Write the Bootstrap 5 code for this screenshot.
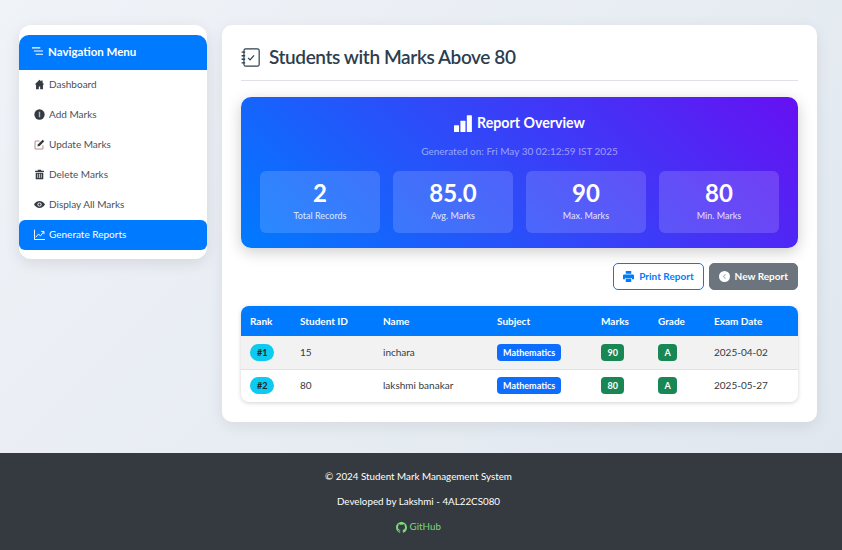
<!DOCTYPE html>
<html lang="en">
<head>
<meta charset="UTF-8">
<title>Students with Marks Above 80</title>
<link href="https://cdn.jsdelivr.net/npm/bootstrap@5.3.0/dist/css/bootstrap.min.css" rel="stylesheet">
<style>
  body {
    font-family: "Lato", "Liberation Sans", sans-serif;
    background: linear-gradient(135deg, #f0f3f8 0%, #dfe6ee 100%);
    min-height: 550px;
    color: #2c3e50;
    font-size: 10px;
  }
  .page-grid {
    display: grid;
    grid-template-columns: 188px 595px;
    gap: 15px;
    padding: 25px 25px 31px 19px;
    align-items: start;
  }
  .side-panel {
    background: #fff;
    border-radius: 12px;
    padding: 10px 0 9px;
    box-shadow: 0 4px 15px rgba(0, 0, 0, .1);
  }
  .side-head {
    background: #007bff;
    color: #fff;
    height: 35px;
    border-radius: 10px 10px 0 0;
    font-weight: 700;
    font-size: 11.5px;
    padding-left: 13px;
    padding-bottom: 2px;
    gap: 5px;
  }
  .side-link {
    height: 30px;
    padding-left: 15px;
    padding-bottom: 1px;
    gap: 4px;
    color: #495057;
    text-decoration: none;
    font-size: 10px;
  }
  .side-link.active {
    background: #007bff;
    color: #fff;
    border-radius: 6px;
  }
  .side-link svg { width: 11px; height: 11px; }
  .main-panel {
    background: #fff;
    border-radius: 10px;
    padding: 20px 19px;
    box-shadow: 0 4px 15px rgba(0, 0, 0, .08);
  }
  .page-title {
    height: 36px;
    border-bottom: 1px solid #dee2e6;
    padding-bottom: 11px;
    margin-bottom: 16px;
    gap: 9px;
    font-size: 19px;
    font-weight: 600;
    letter-spacing: -.4px;
    color: #2c3e50;
  }
  .report-box {
    background: linear-gradient(45deg, #007bff 0%, #6610f2 100%);
    border-radius: 10px;
    padding: 16px 19px 15px;
    color: #fff;
    height: 151px;
    box-shadow: 0 4px 15px rgba(0, 0, 0, .2);
  }
  .report-title { font-size: 14.2px; font-weight: 700; gap: 5px; height: 20px; }
  .report-date { font-size: 10px; color: rgba(255, 255, 255, .5); margin: 12px 0 13px; height: 13px; line-height: 13px; }
  .stat-row { display: grid; grid-template-columns: repeat(4, 120px); gap: 13px; }
  .stat-box {
    background: rgba(255, 255, 255, .15);
    border-radius: 6px;
    height: 62px;
    padding-top: 7px;
  }
  .stat-num { font-size: 24px; font-weight: 700; line-height: 29px; }
  .stat-lbl { font-size: 9px; font-weight: 500; color: rgba(255, 255, 255, .8); line-height: 14px; margin-top: 2px; }
  .action-row { margin: 15px 0 16px; gap: 5px; }
  .action-btn {
    height: 27px;
    font-size: 10px;
    font-weight: 700;
    padding: 0 9px;
    gap: 5px;
    border-radius: 5px;
    display: inline-flex;
    align-items: center;
  }
  .btn-outline-primary.action-btn { border-color: #007bff; color: #007bff; }
  .table-wrap {
    border-radius: 8px;
    overflow: hidden;
    box-shadow: 0 1px 4px rgba(0, 0, 0, .18);
  }
  .marks-table { margin: 0; font-size: 10px; width: 100%; table-layout: fixed; }
  .marks-table th {
    background: #007bff;
    color: #fff;
    border: 0;
    height: 30px;
    padding: 1px 9px 0;
    font-weight: 700;
    vertical-align: middle;
  }
  .marks-table td { height: 33px; padding: 1px 9px 0; vertical-align: middle; color: #343a40; border-color: #dee2e6; }
  .marks-table tr:last-child td { border-bottom: 0; height: 33px; padding-top: 0; }
  .row-shade td { background: #f2f2f2; }
  .pill-tag, .sq-tag {
    display: inline-block;
    font-size: 9px;
    font-weight: 700;
    line-height: 17px;
    color: #fff;
    border-radius: 4px;
  }
  .pill-tag { background: #0dcaf0; color: #212529; border-radius: 9px; padding: 0 7px; }
  .sq-tag { padding: 0 6.500px; }
  .tag-blue { background: #0d6efd; padding: 0 6px; }
  .tag-green { background: #198754; }
  .site-foot {
    background: #343a40;
    color: #fff;
    height: 97px;
    padding: 17px 5px 0 0;
    font-size: 9.800px;
    line-height: 13px;
  }
  .site-foot p { margin: 0 0 12px; }
  .site-foot a { color: #7ad97a; text-decoration: none; }
</style>
</head>
<body>
<div class="page-grid">
  <aside class="side-panel">
    <div class="side-head d-flex align-items-center">
      <svg width="11" height="11" viewBox="0 0 12 12" fill="none" stroke="#fff" stroke-width="1.200"><path d="M0 2h9M2 5.500h10M4 9h8"/></svg>
      Navigation Menu
    </div>
    <nav class="d-flex flex-column">
      <a class="side-link d-flex align-items-center" href="#">
        <svg viewBox="0 0 16 16" fill="#343a40"><path d="M8 1 1 8h2v7h4v-4h2v4h4V8h2l-2.500-2.500V2h-2v1.500z"/></svg>
        Dashboard</a>
      <a class="side-link d-flex align-items-center" href="#">
        <svg viewBox="0 0 16 16"><circle cx="8" cy="8" r="7.500" fill="#343a40"/><rect x="7" y="4" width="2" height="8" fill="#adb5bd"/></svg>
        Add Marks</a>
      <a class="side-link d-flex align-items-center" href="#">
        <svg viewBox="0 0 16 16" fill="none"><path d="M13 9v4.500a1 1 0 0 1-1 1H2.500a1 1 0 0 1-1-1V4a1 1 0 0 1 1-1H8" stroke="#b58f86" stroke-width="1.500"/><path d="M5 11l.8-3.200 6.800-6.800 2.400 2.400-6.800 6.800z" fill="#343a40"/></svg>
        Update Marks</a>
      <a class="side-link d-flex align-items-center" href="#">
        <svg viewBox="0 0 16 16" fill="#343a40"><path d="M1.500 2.500H5.500V1h5v1.500h4V4.500h-13zM2.500 5.500h11V15h-11zM5 7v6h1V7zM7.500 7v6h1V7zM10 7v6h1V7z" fill-rule="evenodd"/></svg>
        Delete Marks</a>
      <a class="side-link d-flex align-items-center" href="#">
        <svg viewBox="0 0 16 16"><path d="M0 8s3-5 8-5 8 5 8 5-3 5-8 5-8-5-8-5" fill="#343a40"/><circle cx="8" cy="8" r="3" fill="#fff"/><circle cx="8" cy="8" r="1.700" fill="#343a40"/></svg>
        Display All Marks</a>
      <a class="side-link active d-flex align-items-center" href="#">
        <svg viewBox="0 0 16 16" fill="none" stroke="#fff" stroke-width="1.400"><path d="M.7 1v14.300H16M2.500 12l4-4.500 3 2.500L14 4M10.500 3.500h4v4"/></svg>
        Generate Reports</a>
    </nav>
  </aside>

  <main class="main-panel">
    <div class="page-title d-flex align-items-center">
      <svg width="19" height="19" viewBox="0 0 16 16" fill="none" stroke="#2c3e50"><rect x="2.500" y=".7" width="12.800" height="14.600" rx="1.500" stroke-width="1"/><path d="M6 8.300 7.600 10 11 6.200" stroke-width="1"/><path d="M.5 3.500h3M.5 6.500h3M.5 9.500h3M.5 12.500h3" stroke-width="1.200"/></svg>
      Students with Marks Above 80
    </div>

    <section class="report-box text-center">
      <div class="report-title d-flex align-items-center justify-content-center">
        <svg width="18" height="18" viewBox="0 0 16 16" fill="#fff"><rect x="0" y="10" width="4.500" height="6" rx=".5"/><rect x="5.700" y="6" width="4.500" height="10" rx=".5"/><rect x="11.400" y="1" width="4.500" height="15" rx=".5"/></svg>
        Report Overview
      </div>
      <div class="report-date">Generated on: Fri May 30 02:12:59 IST 2025</div>
      <div class="stat-row">
        <div class="stat-box"><div class="stat-num">2</div><div class="stat-lbl">Total Records</div></div>
        <div class="stat-box"><div class="stat-num">85.0</div><div class="stat-lbl">Avg. Marks</div></div>
        <div class="stat-box"><div class="stat-num">90</div><div class="stat-lbl">Max. Marks</div></div>
        <div class="stat-box"><div class="stat-num">80</div><div class="stat-lbl">Min. Marks</div></div>
      </div>
    </section>

    <div class="action-row d-flex justify-content-end">
      <button type="button" class="btn btn-outline-primary action-btn">
        <svg width="11" height="11" viewBox="0 0 16 16" fill="#007bff"><path d="M4 0h8v4H4zM1.500 5h13A1.500 1.500 0 0 1 16 6.500V12h-3v-2H3v2H0V6.500A1.500 1.500 0 0 1 1.500 5M4 11h8v5H4z"/></svg>
        Print Report</button>
      <button type="button" class="btn btn-secondary action-btn">
        <svg width="11" height="11" viewBox="0 0 16 16"><circle cx="8" cy="8" r="8" fill="#fff"/><path d="M9.500 5 6.500 8l3 3" fill="none" stroke="#adb5bd" stroke-width="1.500"/></svg>
        New Report</button>
    </div>

    <div class="table-wrap">
      <table class="table marks-table">
        <colgroup><col style="width:50px"><col style="width:83px"><col style="width:114px"><col style="width:104px"><col style="width:57px"><col style="width:56px"><col></colgroup>
        <thead>
          <tr><th>Rank</th><th>Student ID</th><th>Name</th><th>Subject</th><th>Marks</th><th>Grade</th><th>Exam Date</th></tr>
        </thead>
        <tbody>
          <tr class="row-shade">
            <td><span class="pill-tag">#1</span></td><td>15</td><td>inchara</td>
            <td><span class="sq-tag tag-blue">Mathematics</span></td>
            <td><span class="sq-tag tag-green">90</span></td>
            <td><span class="sq-tag tag-green">A</span></td>
            <td>2025-04-02</td>
          </tr>
          <tr>
            <td><span class="pill-tag">#2</span></td><td>80</td><td>lakshmi banakar</td>
            <td><span class="sq-tag tag-blue">Mathematics</span></td>
            <td><span class="sq-tag tag-green">80</span></td>
            <td><span class="sq-tag tag-green">A</span></td>
            <td>2025-05-27</td>
          </tr>
        </tbody>
      </table>
    </div>
  </main>
</div>

<footer class="site-foot text-center">
  <p>© 2024 Student Mark Management System</p>
  <p>Developed by Lakshmi - 4AL22CS080</p>
  <a href="#"><svg width="11" height="11" viewBox="0 0 16 16" fill="#7ad97a"><path d="M8 0C3.580 0 0 3.580 0 8c0 3.540 2.290 6.530 5.470 7.590.4.070.55-.17.55-.38 0-.19-.01-.82-.01-1.490-2.010.37-2.530-.49-2.690-.94-.09-.23-.48-.94-.82-1.130-.28-.15-.68-.52-.01-.53.63-.01 1.080.58 1.230.82.720 1.210 1.870.87 2.330.66.070-.52.280-.87.510-1.070-1.780-.2-3.640-.89-3.640-3.950 0-.87.310-1.590.820-2.150-.08-.2-.36-1.020.08-2.120 0 0 .67-.21 2.200.82.640-.18 1.320-.27 2-.27s1.360.09 2 .27c1.530-1.040 2.200-.82 2.200-.82.440 1.100.160 1.920.080 2.120.510.560.820 1.270.820 2.150 0 3.070-1.870 3.750-3.650 3.950.290.250.540.730.540 1.480 0 1.070-.01 1.930-.01 2.200 0 .210.150.460.550.380A8.010 8.010 0 0 0 16 8c0-4.420-3.580-8-8-8"/></svg> GitHub</a>
</footer>
<script src="https://cdn.jsdelivr.net/npm/bootstrap@5.3.0/dist/js/bootstrap.bundle.min.js"></script>
</body>
</html>
